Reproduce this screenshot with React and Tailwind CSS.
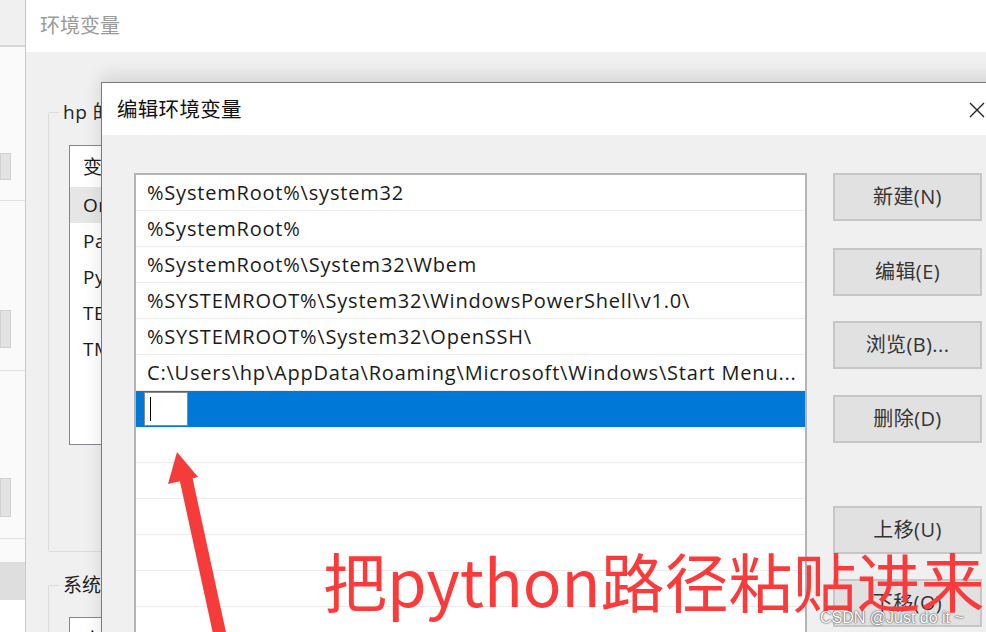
import React from "react";

const font = "font-['Open_Sans','Noto_Sans_CJK_SC',sans-serif]";

const paths = [
  "%SystemRoot%\\system32",
  "%SystemRoot%",
  "%SystemRoot%\\System32\\Wbem",
  "%SYSTEMROOT%\\System32\\WindowsPowerShell\\v1.0\\",
  "%SYSTEMROOT%\\System32\\OpenSSH\\",
  "C:\\Users\\hp\\AppData\\Roaming\\Microsoft\\Windows\\Start Menu...",
];

const buttons = [
  { label: "新建(N)", mt: "mt-0" },
  { label: "编辑(E)", mt: "mt-[27px]" },
  { label: "浏览(B)...", mt: "mt-[25px]" },
  { label: "删除(D)", mt: "mt-[26px]" },
  { label: "上移(U)", mt: "mt-[63px]" },
  { label: "下移(O)", mt: "mt-[25px]" },
];

const userVars = ["OneDrive", "Path", "PyCharm Community Edition", "TEMP", "TMP"];

const BackStrip = () => (
  <div className="absolute left-0 top-0 w-[25px] h-[632px] flex flex-col bg-[#fafafa]">
    <div className="h-[45px] bg-[#f0f0f0]" />
    <div className="h-[2px] bg-[#d6d6d6]" />
    <div className="h-[106px]" />
    <div className="h-[27px] w-[11px] bg-[#e3e3e3] border border-[#d0d0d0]" />
    <div className="h-[20px]" />
    <div className="h-px bg-[#e2e2e2]" />
    <div className="h-[109px]" />
    <div className="h-[38px] w-[11px] bg-[#e3e3e3] border border-[#d0d0d0]" />
    <div className="h-[22px]" />
    <div className="h-px bg-[#e2e2e2]" />
    <div className="h-[107px]" />
    <div className="h-[39px] w-[11px] bg-[#e3e3e3] border border-[#d0d0d0]" />
    <div className="h-[21px]" />
    <div className="h-px bg-[#e2e2e2]" />
    <div className="h-[23px]" />
    <div className="h-[38px] bg-[#dedede]" />
    <div className="flex-1 bg-white" />
  </div>
);

const EnvWindow = () => (
  <div className="absolute left-[25px] top-0 w-[980px] h-[680px] border-l border-[#c8c8c8] flex flex-col bg-[#f0f0f0]">
    <div className="h-[52px] bg-white flex items-center pl-[14px] text-[20px] text-[#9a9a9a] shrink-0">
      环境变量
    </div>
    <div className="pl-[22px] pt-[60px] flex flex-col">
      <div className="relative w-[400px] h-[440px] border border-[#dcdcdc] rounded-[2px]">
        <div className="absolute left-[10px] -top-[14px] px-[4px] bg-[#f0f0f0] text-[19px] text-[#222] leading-[26px] tracking-[0.5px]">
          hp 的用户变量(U)
        </div>
        <div className="ml-[20px] mt-[32px] w-[360px] h-[300px] bg-white border border-[#828790] flex flex-col pt-px text-[19px] text-[#1a1a1a] tracking-[0.5px]">
          <div className="h-[40px] flex items-center pl-[13px]">变量</div>
          {userVars.map((v, i) => (
            <div
              key={v}
              className={`h-[36px] flex items-center pl-[13px] ${i === 0 ? "bg-[#e6e6e6]" : ""}`}
            >
              {v}
            </div>
          ))}
        </div>
      </div>
      <div className="relative mt-[33px] w-[400px] h-[120px] border border-[#dcdcdc] rounded-[2px]">
        <div className="absolute left-[10px] -top-[14px] px-[4px] bg-[#f0f0f0] text-[19px] text-[#222] leading-[26px]">
          系统变量(S)
        </div>
        <div className="ml-[20px] mt-[31px] w-[360px] h-[100px] bg-white border border-[#828790] pt-[8px] pl-[13px] text-[19px]">
          变量
        </div>
      </div>
    </div>
  </div>
);

const EditDialog = () => (
  <div className="absolute left-[101px] top-[82px] w-[920px] h-[600px] border border-[#7a7a7a] shadow-[0_-6px_16px_rgba(0,0,0,0.12)] flex flex-col bg-[#f0f0f0]">
    <div className="h-[52px] bg-white flex items-center justify-between pl-[15px] pr-[35px] shrink-0">
      <span className="text-[20.5px] text-[#111] tracking-[0.3px]">编辑环境变量</span>
      <svg width="16" height="16" viewBox="0 0 16 16" className="mt-[1px]">
        <path d="M1 1 L15 15 M15 1 L1 15" stroke="#222" strokeWidth="1.4" />
      </svg>
    </div>
    <div className="flex pl-[32px] pt-[38px]">
      <div className="w-[673px] h-[480px] bg-white border-2 border-[#b4b4b8] flex flex-col">
        {paths.map((p) => (
          <div
            key={p}
            className="h-[36px] shrink-0 flex items-center pl-[11px] border-b border-[#ececec] text-[20px] tracking-[0.8px] text-[#1a1a1a] whitespace-nowrap"
          >
            {p}
          </div>
        ))}
        <div className="h-[36px] shrink-0 bg-[#0078d7] flex items-center pl-[8px]">
          <div className="w-[44px] h-[34px] bg-white border border-[#8a8a8a] flex items-center pl-[5px]">
            <div className="w-px h-[24px] bg-black" />
          </div>
        </div>
        {[0, 1, 2, 3, 4, 5].map((i) => (
          <div key={i} className="h-[36px] shrink-0 border-b border-[#ececec]" />
        ))}
      </div>
      <div className="ml-[26px] flex flex-col">
        {buttons.map((b) => (
          <div
            key={b.label}
            className={`${b.mt} w-[149px] h-[48px] bg-[#e1e1e1] border-2 border-[#c6c6c6] flex items-center justify-center text-[20px] tracking-[0.4px] text-[#333]`}
          >
            {b.label}
          </div>
        ))}
      </div>
    </div>
  </div>
);

const Arrow = () => (
  <svg className="absolute left-0 top-0" width="986" height="632" viewBox="0 0 986 632">
    <line x1="185" y1="474" x2="221" y2="640" stroke="#f63b3b" strokeWidth="13" />
    <polygon points="177,452 168,484 198,477" fill="#f63b3b" />
  </svg>
);

export default function App() {
  return (
    <div className={`relative w-[986px] h-[632px] overflow-hidden bg-[#f0f0f0] ${font}`}>
      <BackStrip />
      <EnvWindow />
      <EditDialog />
      <Arrow />
      <div className="absolute left-[323px] top-[539px] text-[64px] leading-[80px] text-[#fb3b3b] whitespace-nowrap font-['Noto_Sans_CJK_SC',sans-serif]">
        把python路径粘贴进来
      </div>
      <div className="absolute left-[820px] top-[606px] text-[16px] text-white whitespace-nowrap font-['Liberation_Sans',sans-serif] [text-shadow:0_0_2px_#555,0_0_1px_#333]">
        CSDN @Just do it ~
      </div>
    </div>
  );
}
